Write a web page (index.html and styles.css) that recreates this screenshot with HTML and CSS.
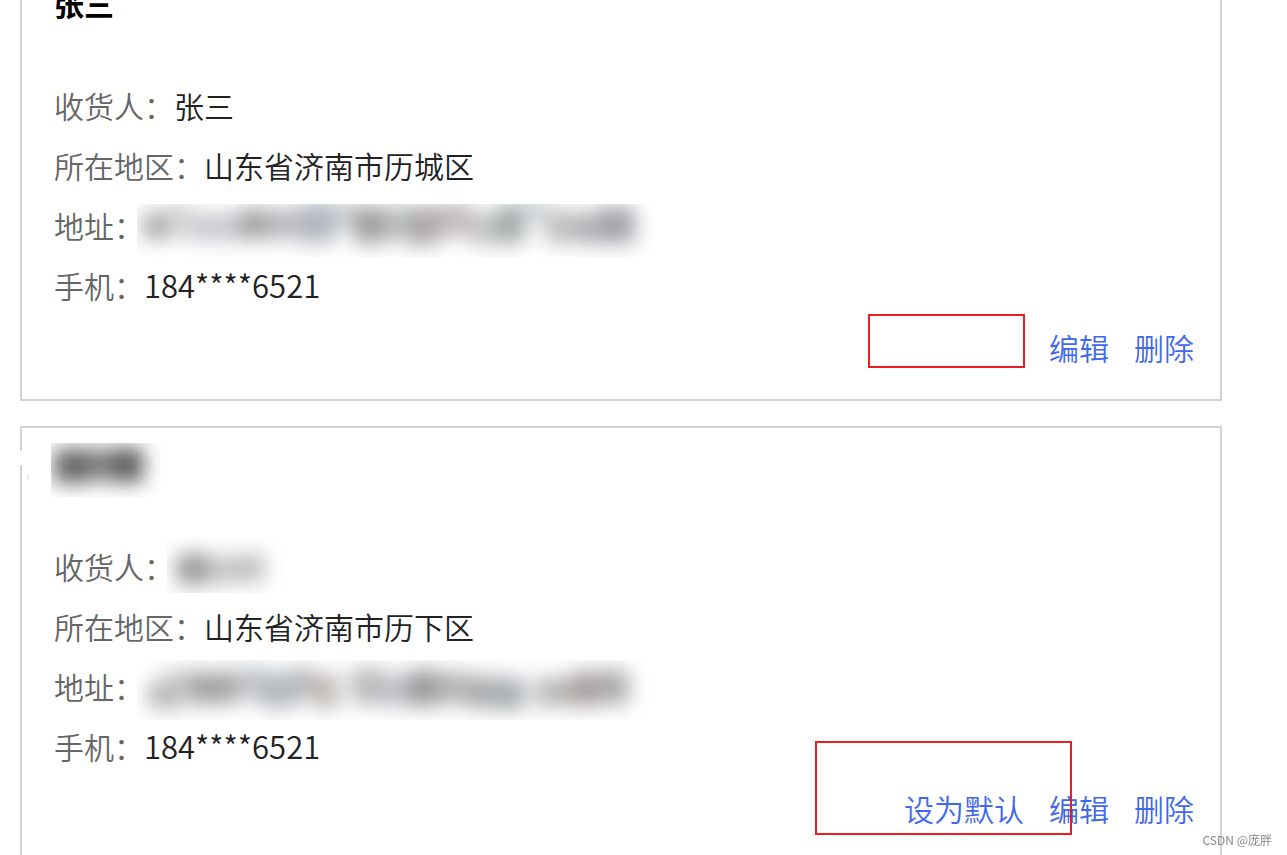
FILE: index.html
```html
<!DOCTYPE html>
<html lang="zh-CN">
<head>
<meta charset="UTF-8">
<meta name="viewport" content="width=device-width, initial-scale=1.0">
<title>收货地址</title>
<link rel="stylesheet" href="styles.css">
</head>
<body>
    <main class="address-list">
        <section class="card">
            <h2 class="name">张三</h2>
            <dl class="info">
                <div class="row"><dt>收货人：</dt><dd>张三</dd></div>
                <div class="row"><dt>所在地区：</dt><dd>山东省济南市历城区</dd></div>
                <div class="row">
                    <dt>地址：</dt>
                    <dd class="masked">
                        <svg width="530" height="62" viewBox="0 0 530 62" aria-hidden="true">
                            <defs>
                                <filter id="soft" x="-20%" y="-100%" width="140%" height="300%" color-interpolation-filters="sRGB"><feGaussianBlur stdDeviation="10"/></filter>
                                <clipPath id="clip1"><rect x="0" y="9" width="530" height="53"/></clipPath>
                            </defs>
                            <g clip-path="url(#clip1)">
                                <g class="smudge" filter="url(#soft)">
                                    <rect x="6" y="18" width="26" height="26" fill="#8f8f8f"/>
                                    <rect x="32" y="6" width="22" height="36" fill="#d2cfcb"/>
                                    <rect x="50" y="18" width="52" height="28" fill="#b9bdc3"/>
                                    <rect x="102" y="14" width="28" height="30" fill="#8a8a8a"/>
                                    <rect x="130" y="14" width="34" height="30" fill="#a8a8ae"/>
                                    <rect x="164" y="8" width="34" height="40" fill="#9ba4ae"/>
                                    <rect x="198" y="6" width="20" height="28" fill="#c4c7cb"/>
                                    <rect x="217" y="12" width="28" height="36" fill="#858280"/>
                                    <rect x="245" y="12" width="28" height="34" fill="#a6aaae"/>
                                    <rect x="273" y="12" width="28" height="38" fill="#94908c"/>
                                    <rect x="301" y="8" width="34" height="34" fill="#b3a9ac"/>
                                    <rect x="335" y="18" width="28" height="32" fill="#b3b5b5"/>
                                    <rect x="360" y="10" width="28" height="38" fill="#8a9293"/>
                                    <rect x="386" y="4" width="26" height="22" fill="#c0c8cc"/>
                                    <rect x="408" y="16" width="32" height="32" fill="#adadad"/>
                                    <rect x="440" y="18" width="26" height="30" fill="#9c9ca2"/>
                                    <rect x="462" y="12" width="36" height="36" fill="#8a8a91"/>
                                </g>
                            </g>
                        </svg>
                    </dd>
                </div>
                <div class="row"><dt>手机：</dt><dd class="phone">184****6521</dd></div>
            </dl>
            <div class="actions">
                <a href="#">编辑</a>
                <a href="#">删除</a>
            </div>
            <span class="mark mark-empty"></span>
        </section>

        <section class="card card-notch">
            <h2 class="name name-masked">
                <svg width="150" height="62" viewBox="0 0 150 62" aria-hidden="true">
                    <defs><clipPath id="clip2"><rect x="0" y="8" width="150" height="54"/></clipPath></defs>
                    <g clip-path="url(#clip2)">
                        <g class="smudge" filter="url(#soft)">
                            <rect x="3" y="14" width="34" height="34" fill="#3c3f40"/>
                            <rect x="37" y="14" width="27" height="32" fill="#605f5d"/>
                            <rect x="64" y="13" width="28" height="34" fill="#2f2f2c"/>
                        </g>
                    </g>
                </svg>
            </h2>
            <dl class="info">
                <div class="row">
                    <dt>收货人：</dt>
                    <dd class="masked">
                        <svg width="130" height="60" viewBox="0 0 130 60" aria-hidden="true">
                            <defs><clipPath id="clip3"><rect x="0" y="0" width="130" height="57"/></clipPath></defs>
                            <g clip-path="url(#clip3)">
                                <g class="smudge" filter="url(#soft)">
                                    <rect x="10" y="18" width="30" height="30" fill="#7d7b79"/>
                                    <rect x="40" y="20" width="28" height="28" fill="#b5b6b9"/>
                                    <rect x="68" y="18" width="30" height="28" fill="#adafb1"/>
                                </g>
                            </g>
                        </svg>
                    </dd>
                </div>
                <div class="row"><dt>所在地区：</dt><dd>山东省济南市历下区</dd></div>
                <div class="row">
                    <dt>地址：</dt>
                    <dd class="masked">
                        <svg width="530" height="64" viewBox="0 0 530 64" aria-hidden="true">
                            <defs><clipPath id="clip4"><rect x="0" y="4" width="530" height="60"/></clipPath></defs>
                            <g clip-path="url(#clip4)">
                                <g class="smudge" filter="url(#soft)">
                                    <rect x="12" y="26" width="32" height="26" fill="#9a9a98"/>
                                    <rect x="26" y="14" width="26" height="20" fill="#c2beb9"/>
                                    <rect x="50" y="16" width="48" height="32" fill="#8b8b8b"/>
                                    <rect x="98" y="12" width="28" height="32" fill="#b0b5b9"/>
                                    <rect x="124" y="16" width="36" height="36" fill="#9ea6ac"/>
                                    <rect x="158" y="12" width="18" height="30" fill="#a3a3a8"/>
                                    <rect x="176" y="18" width="26" height="34" fill="#aca6a0"/>
                                    <rect x="214" y="12" width="32" height="36" fill="#aba8a8"/>
                                    <rect x="246" y="18" width="26" height="32" fill="#afafb9"/>
                                    <rect x="272" y="14" width="28" height="36" fill="#808080"/>
                                    <rect x="300" y="16" width="32" height="32" fill="#a0a0a0"/>
                                    <rect x="332" y="20" width="28" height="32" fill="#959598"/>
                                    <rect x="360" y="22" width="28" height="32" fill="#8f989c"/>
                                    <rect x="398" y="22" width="36" height="28" fill="#a3a3a3"/>
                                    <rect x="434" y="16" width="26" height="34" fill="#908886"/>
                                    <rect x="460" y="14" width="32" height="34" fill="#969697"/>
                                </g>
                            </g>
                        </svg>
                    </dd>
                </div>
                <div class="row"><dt>手机：</dt><dd class="phone">184****6521</dd></div>
            </dl>
            <div class="actions">
                <a href="#">设为默认</a>
                <a href="#">编辑</a>
                <a href="#">删除</a>
            </div>
            <span class="mark mark-default"></span>
        </section>
    </main>
    <div class="watermark">CSDN @庞胖</div>
</body>
</html>
```
FILE: styles.css
```css
* {
    box-sizing: border-box;
}
body {
    margin: 0;
    height: 100vh;
    overflow: hidden;
    background-color: #fff;
    color: #222;
    font-family: "Noto Sans CJK SC", sans-serif;
    font-size: 30px;
    font-weight: 350;
    line-height: 60px;
}
/* the list is scrolled a little past the top of the first card */
.address-list {
    display: flex;
    flex-direction: column;
    gap: 25px;
    margin: -35px 65px 0 20px;
}
.card {
    position: relative;
    padding: 7px 26px 22px 32px;
    border: 2px solid #d3d3d3;
}
.name {
    margin: 0 0 41px;
    height: 60px;
    color: #000;
    font-size: 30px;
    font-weight: 700;
    line-height: 58px;
}
.name-masked {
    margin-left: -3px;
}
.info {
    margin: 0;
}
.row {
    display: flex;
    height: 60px;
}
.row dt {
    color: #666;
}
.row dd {
    margin: 0;
}
.row .masked {
    margin-left: -7px;
}
.row .phone {
    font-size: 31px;
}
svg {
    display: block;
}
.smudge {
    opacity: 0.8;
}
.actions {
    display: flex;
    justify-content: flex-end;
    gap: 25px;
    margin-top: 2px;
}
.actions a {
    color: #3f68ef;
    text-decoration: none;
}
/* red frames drawn over the action links */
.mark {
    position: absolute;
    border: 2px solid #ed1c24;
}
.mark-empty {
    right: 195px;
    bottom: 31px;
    width: 157px;
    height: 54px;
}
.mark-default {
    right: 148px;
    bottom: 25px;
    width: 257px;
    height: 94px;
}
.card-notch::before {
    content: "";
    position: absolute;
    left: -2px;
    top: 23px;
    width: 2px;
    height: 14px;
    background-color: #fff;
}
.card-notch::after {
    content: "";
    position: absolute;
    left: 5px;
    top: 46px;
    width: 2px;
    height: 6px;
    background-color: #eee;
}
.watermark {
    position: fixed;
    right: 15px;
    bottom: 6px;
    color: #888;
    font-size: 12px;
    font-weight: 400;
    line-height: 18px;
}
```
